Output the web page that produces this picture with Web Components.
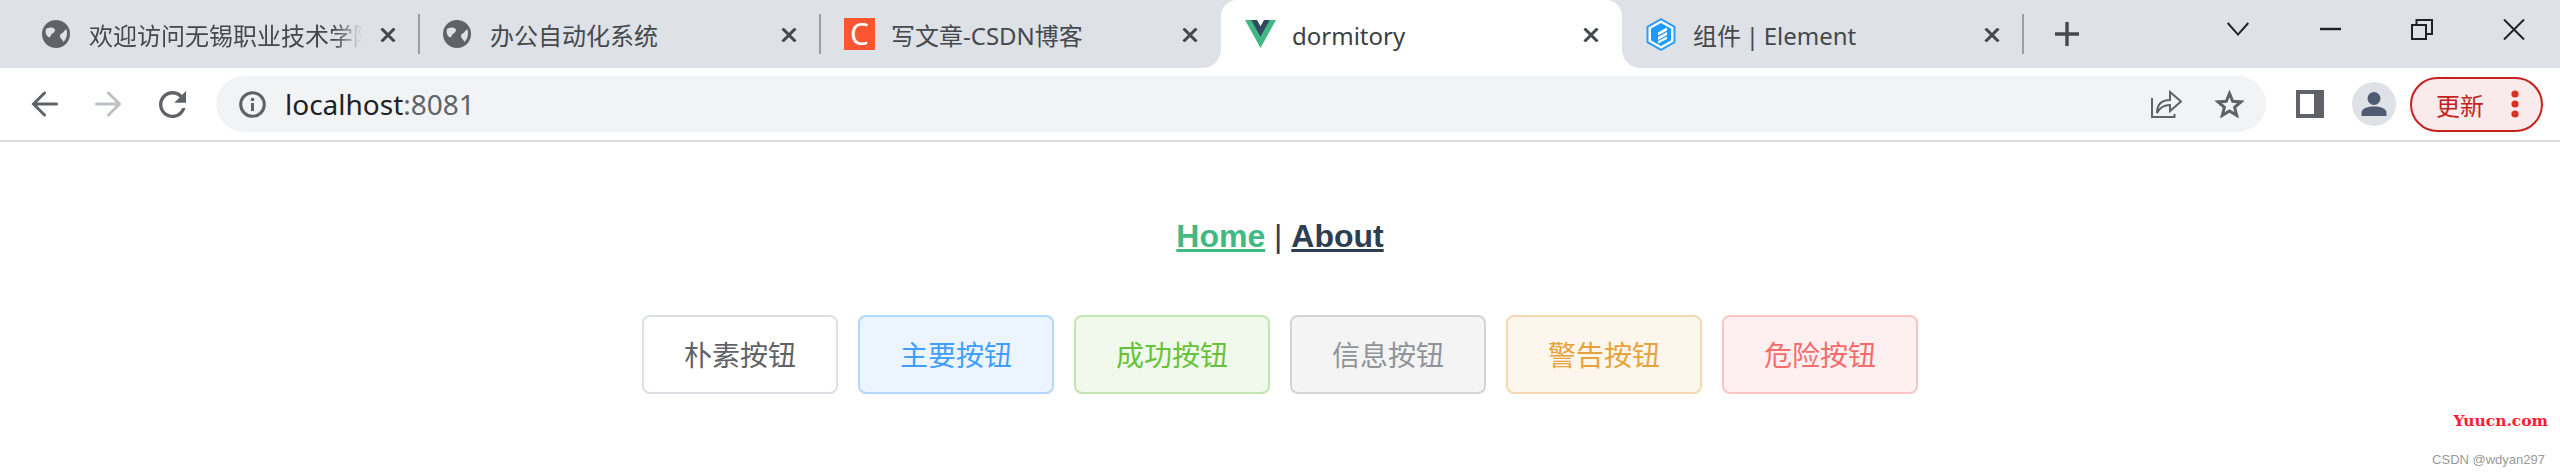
<!DOCTYPE html>
<html lang="zh-CN">
<head>
<meta charset="utf-8">
<title>dormitory</title>
<style>
html, body { margin: 0; padding: 0; background: #fff; }
body { width: 2560px; height: 476px; overflow: hidden; font-family: "Noto Sans", "Noto Sans CJK SC", sans-serif; }
</style>
</head>
<body>
<template id="globe">
    <svg width="28" height="28" viewBox="0 0 28 28"><path fill="#5f6368" fill-rule="evenodd" d="M14 0a14 14 0 1 0 0 28a14 14 0 0 0 0-28ZM4 9c3-1.500 6-2 8-.5c2 1.500 .5 4-1.500 5c-2 1-1.500 3-3 4C4.500 16.500 3 13 4 9ZM24.500 9c1 4.500 .5 9.500-3 13c-1-2.500-3.500-3.500-3.500-6c0-2.500 2.500-2.500 3.500-4c1-1.500 2-2 3-3Z"/></svg>
</template>
<script>
    const closeIcon = `<svg width="16" height="14" viewBox="0 0 16 14"><path d="M1.500 .5L14.500 13.500M14.500 .5L1.500 13.500" stroke="#45494e" stroke-width="3" fill="none"/></svg>`;

    class BrowserTab extends HTMLElement {
        constructor() {
            super();
            this.attachShadow({ mode: 'open' });
            this.shadowRoot.innerHTML = `
                <style>
                    :host {
                        display: flex;
                        align-items: center;
                        position: relative;
                        box-sizing: border-box;
                        width: 401px;
                        height: 68px;
                        padding: 0 23px 0 24px;
                        flex: none;
                        color: #45494e;
                        font-size: 24px;
                    }
                    :host([active]) {
                        background: #fff;
                        color: #3c4043;
                        border-radius: 16px 16px 0 0;
                        z-index: 1;
                    }
                    :host([active])::before, :host([active])::after {
                        content: '';
                        position: absolute;
                        bottom: 0;
                        width: 18px;
                        height: 18px;
                    }
                    :host([active])::before {
                        left: -18px;
                        background: radial-gradient(circle at 0 0, transparent 17.5px, #fff 18px);
                    }
                    :host([active])::after {
                        right: -18px;
                        background: radial-gradient(circle at 100% 0, transparent 17.5px, #fff 18px);
                    }
                    .icon {
                        display: flex;
                        width: 31px;
                        flex: none;
                        margin-right: 16px;
                    }
                    .title {
                        flex: 1;
                        min-width: 0;
                        overflow: hidden;
                        white-space: nowrap;
                        line-height: 34px;
                        margin-top: 3px;
                        word-spacing: -1.500px;
                    }
                    :host([fade]) .title {
                        -webkit-mask-image: linear-gradient(to right, #000 calc(100% - 32px), transparent calc(100% - 4px));
                    }
                    .close { display: flex; margin-left: 14px; margin-top: 2px; }
                </style>
                <span class="icon"><slot name="icon"></slot></span>
                <span class="title"><slot></slot></span>
                <span class="close">${closeIcon}</span>
            `;
        }
    }
    customElements.define('browser-tab', BrowserTab);

    class GlobeIcon extends HTMLElement {
        constructor() {
            super();
            this.attachShadow({ mode: 'open' });
            this.shadowRoot.innerHTML = `<style>:host { display: flex; }</style>`;
            this.shadowRoot.appendChild(document.getElementById('globe').content.cloneNode(true));
        }
    }
    customElements.define('globe-icon', GlobeIcon);

    class BrowserTabstrip extends HTMLElement {
        constructor() {
            super();
            this.attachShadow({ mode: 'open' });
            this.shadowRoot.innerHTML = `
                <style>
                    :host {
                        display: flex;
                        align-items: center;
                        height: 68px;
                        padding-left: 18px;
                        background: #dee1e6;
                    }
                    .tabs { display: flex; align-items: center; }
                    .plus { display: flex; margin-left: 32px; margin-top: -1px; }
                    .controls { display: flex; margin-left: auto; height: 68px; }
                    .controls span {
                        display: flex;
                        width: 92px;
                        justify-content: center;
                        padding-top: 19px;
                        box-sizing: border-box;
                    }
                </style>
                <div class="tabs"><slot></slot></div>
                <span class="plus"><svg width="24" height="24" viewBox="0 0 24 24"><path d="M12 0V24M0 12H24" stroke="#45494e" stroke-width="3.400"/></svg></span>
                <div class="controls">
                    <span><svg width="22" height="20" viewBox="0 0 22 20"><path d="M.7 4L11 15.600L21.300 4" stroke="#202124" stroke-width="2" fill="none"/></svg></span>
                    <span><svg width="21" height="20" viewBox="0 0 21 20"><path d="M0 10H21" stroke="#202124" stroke-width="2.400"/></svg></span>
                    <span><svg width="22" height="21" viewBox="0 0 22 21"><path d="M1 6H15V20H1ZM5.500 6V1H21V15H15" stroke="#202124" stroke-width="2" fill="none"/></svg></span>
                    <span><svg width="22" height="21" viewBox="0 0 22 21"><path d="M1 .5L21 20.500M21 .5L1 20.500" stroke="#202124" stroke-width="2" fill="none"/></svg></span>
                </div>
            `;
        }
    }
    customElements.define('browser-tabstrip', BrowserTabstrip);

    class TabSeparator extends HTMLElement {
        constructor() {
            super();
            this.attachShadow({ mode: 'open' });
            this.shadowRoot.innerHTML = `
                <style>
                    :host {
                        display: block;
                        flex: none;
                        width: 2px;
                        height: 40px;
                        margin: 0 -1px;
                        background: #9aa0a6;
                    }
                </style>
            `;
        }
    }
    customElements.define('tab-separator', TabSeparator);

    class BrowserToolbar extends HTMLElement {
        constructor() {
            super();
            this.attachShadow({ mode: 'open' });
            this.shadowRoot.innerHTML = `
                <style>
                    :host {
                        display: flex;
                        align-items: center;
                        height: 72px;
                        padding: 0 17px 0 12px;
                        background: #fff;
                        border-bottom: 2px solid #dadce0;
                    }
                    .btn { display: flex; width: 64px; justify-content: center; align-items: center; flex: none; }
                    .omnibox {
                        display: flex;
                        align-items: center;
                        flex: 1;
                        height: 56px;
                        margin: 0 12px;
                        padding: 0 22px 0 23px;
                        background: #f1f3f4;
                        border-radius: 28px;
                    }
                    .url { margin-left: 19px; font-size: 28px; color: #202124; flex: 1; line-height: 38px; }
                    .url span { color: #5f6368; }
                    .share { display: flex; margin-right: 33px; }
                    .star { display: flex; }
                    .avatar {
                        display: flex;
                        align-items: center;
                        justify-content: center;
                        width: 44px;
                        height: 44px;
                        border-radius: 50%;
                        background: #dee1e6;
                    }
                    .update {
                        display: flex;
                        align-items: center;
                        box-sizing: border-box;
                        width: 133px;
                        height: 55px;
                        margin-left: 4px;
                        padding-left: 24px;
                        border: 2px solid #c5221f;
                        border-radius: 28px;
                        background: #f9ebeb;
                        color: #c5221f;
                        font-size: 24px;
                    }
                    .dots { display: flex; margin-left: 27px; }
                </style>
                <span class="btn"><svg width="27" height="26" viewBox="0 0 27 26"><path d="M25.500 13H3M13.500 2L2.500 13L13.500 24" stroke="#5f6368" stroke-width="3" stroke-linecap="round" fill="none"/></svg></span>
                <span class="btn"><svg width="27" height="26" viewBox="0 0 27 26"><path d="M1.500 13H24M13.500 2L24.500 13L13.500 24" stroke="#bdc1c6" stroke-width="3" stroke-linecap="round" fill="none"/></svg></span>
                <span class="btn"><svg width="27" height="27" viewBox="4 4 16 16"><path fill="#5f6368" d="M17.650 6.350C16.200 4.900 14.210 4 12 4c-4.420 0-7.990 3.580-7.990 8s3.570 8 7.990 8c3.730 0 6.840-2.550 7.730-6h-2.080c-.82 2.330-3.040 4-5.650 4-3.310 0-6-2.690-6-6s2.690-6 6-6c1.660 0 3.140.69 4.220 1.780L13 11h7V4l-2.350 2.350z"/></svg></span>
                <div class="omnibox">
                    <svg width="27" height="27" viewBox="0 0 27 27"><circle cx="13.500" cy="13.500" r="11.800" fill="none" stroke="#5f6368" stroke-width="3"/><path d="M13.500 12V20" stroke="#5f6368" stroke-width="3"/><circle cx="13.500" cy="8.500" r="1.800" fill="#5f6368"/></svg>
                    <span class="url">localhost<span>:8081</span></span>
                    <span class="share"><svg width="31" height="28" viewBox="0 0 31 28"><path d="M1 8V27H23.500V24" stroke="#5f6368" stroke-width="2" fill="none"/><path d="M6 23C6 14 11 10 19 10V2L30 11.500L19 21V15C13 15 9 17 6 23Z" stroke="#5f6368" stroke-width="2" fill="none"/></svg></span>
                    <span class="star"><svg width="29" height="28" viewBox="0 0 29 28"><path d="M14.500 3.500L17.700 11.300L26 11.900L19.600 17.300L21.700 25.400L14.500 21L7.300 25.400L9.400 17.300L3 11.900L11.300 11.300Z" stroke="#5f6368" stroke-width="3" fill="none"/></svg></span>
                </div>
                <span class="btn"><svg width="28" height="28" viewBox="0 0 28 28"><path fill="#5f6368" fill-rule="evenodd" d="M0 0H28V28H0ZM4 4V24H18V4Z"/></svg></span>
                <span class="btn"><span class="avatar"><svg width="26" height="24" viewBox="0 0 26 24"><circle cx="13" cy="6.500" r="6.500" fill="#505a70"/><path fill="#505a70" d="M.5 24V21C.5 16 7 14.500 13 14.500S25.500 16 25.500 21V24Z"/></svg></span></span>
                <div class="update">更新<span class="dots"><svg width="8" height="28" viewBox="0 0 8 28"><g fill="#d93025"><circle cx="4" cy="4" r="3.600"/><circle cx="4" cy="14" r="3.600"/><circle cx="4" cy="24" r="3.600"/></g></svg></span></div>
            `;
        }
    }
    customElements.define('browser-toolbar', BrowserToolbar);

    class VueNav extends HTMLElement {
        constructor() {
            super();
            this.attachShadow({ mode: 'open' });
            this.shadowRoot.innerHTML = `
                <style>
                    :host {
                        display: block;
                        padding-top: 76px;
                        text-align: center;
                        font: 32px "Liberation Sans", Arial, sans-serif;
                        color: #2c3e50;
                    }
                    a { font-weight: bold; color: #2c3e50; text-decoration: underline; }
                    a.active { color: #42b983; }
                </style>
                <a class="active">Home</a> | <a>About</a>
            `;
        }
    }
    customElements.define('vue-nav', VueNav);

    class ElBtn extends HTMLElement {
        constructor() {
            super();
            this.attachShadow({ mode: 'open' });
            this.shadowRoot.innerHTML = `
                <style>
                    :host {
                        display: flex;
                        align-items: center;
                        justify-content: center;
                        box-sizing: border-box;
                        width: 196px;
                        height: 79px;
                        padding-bottom: 2px;
                        border: 2px solid #dcdfe6;
                        border-radius: 8px;
                        background: #fff;
                        color: #606266;
                        font: 28px "Noto Sans CJK SC", sans-serif;
                    }
                    :host([type="primary"]) { background: #ecf5ff; border-color: #b3d8ff; color: #409eff; }
                    :host([type="success"]) { background: #f0f9eb; border-color: #c2e7b0; color: #67c23a; }
                    :host([type="info"]) { background: #f4f4f5; border-color: #d3d4d6; color: #909399; }
                    :host([type="warning"]) { background: #fdf6ec; border-color: #f5dab1; color: #e6a23c; }
                    :host([type="danger"]) { background: #fef0f0; border-color: #fbc4c4; color: #f56c6c; }
                </style>
                <slot></slot>
            `;
        }
    }
    customElements.define('el-btn', ElBtn);

    class BtnRow extends HTMLElement {
        constructor() {
            super();
            this.attachShadow({ mode: 'open' });
            this.shadowRoot.innerHTML = `
                <style>
                    :host {
                        display: flex;
                        justify-content: center;
                        gap: 20px;
                        margin-top: 60px;
                    }
                </style>
                <slot></slot>
            `;
        }
    }
    customElements.define('btn-row', BtnRow);

    class WaterMark extends HTMLElement {
        constructor() {
            super();
            this.attachShadow({ mode: 'open' });
            this.shadowRoot.innerHTML = `
                <style>
                    :host {
                        position: absolute;
                        right: 12px;
                        top: 410px;
                        display: flex;
                        flex-direction: column;
                        align-items: flex-end;
                    }
                    .site { font: bold 15.500px/22px "DejaVu Serif", serif; color: #ff1a35; }
                    .csdn { font: 13px/18px "Liberation Sans", sans-serif; color: #999; margin-top: 19px; margin-right: 3px; }
                </style>
                <span class="site">Yuucn.com</span>
                <span class="csdn">CSDN @wdyan297</span>
            `;
        }
    }
    customElements.define('water-mark', WaterMark);
</script>

<browser-tabstrip>
    <browser-tab fade><globe-icon slot="icon"></globe-icon>欢迎访问无锡职业技术学院</browser-tab>
    <tab-separator></tab-separator>
    <browser-tab><globe-icon slot="icon"></globe-icon>办公自动化系统</browser-tab>
    <tab-separator></tab-separator>
    <browser-tab><span slot="icon" style="display:flex;align-items:center;justify-content:center;width:32px;height:32px;background:#fc5531;color:#fff;font:30px/32px 'Noto Sans',sans-serif;">C</span>写文章-CSDN博客</browser-tab>
    <browser-tab active><svg slot="icon" width="32" height="28" viewBox="0 0 261.760 226.690" preserveAspectRatio="none"><path fill="#41b883" d="M161.096.001l-30.225 52.351L100.647.001H-.005l130.877 226.688L261.749.001z"/><path fill="#34495e" d="M161.096.001l-30.225 52.351L100.647.001H52.346l78.526 136.010L209.398.001z"/></svg>dormitory</browser-tab>
    <browser-tab><svg slot="icon" width="30" height="33" viewBox="0 0 30 33"><path d="M15 1.200L28.500 8.800V24.200L15 31.800L1.500 24.200V8.800Z" fill="#fff" stroke="#2a9dff" stroke-width="2"/><path d="M15 5L25 10.500V22.500L15 28L5 22.500V10.500Z" fill="#1f9bff"/><path d="M12 14.500L21 9.500V12.500L12 17.500ZM12 19L21 14V17L12 22ZM12 23L21 18.500V21L12 25.500Z" fill="#fff"/></svg>组件 | Element</browser-tab>
    <tab-separator></tab-separator>
</browser-tabstrip>
<browser-toolbar></browser-toolbar>
<vue-nav></vue-nav>
<btn-row>
    <el-btn>朴素按钮</el-btn>
    <el-btn type="primary">主要按钮</el-btn>
    <el-btn type="success">成功按钮</el-btn>
    <el-btn type="info">信息按钮</el-btn>
    <el-btn type="warning">警告按钮</el-btn>
    <el-btn type="danger">危险按钮</el-btn>
</btn-row>
<water-mark></water-mark>
</body>
</html>
